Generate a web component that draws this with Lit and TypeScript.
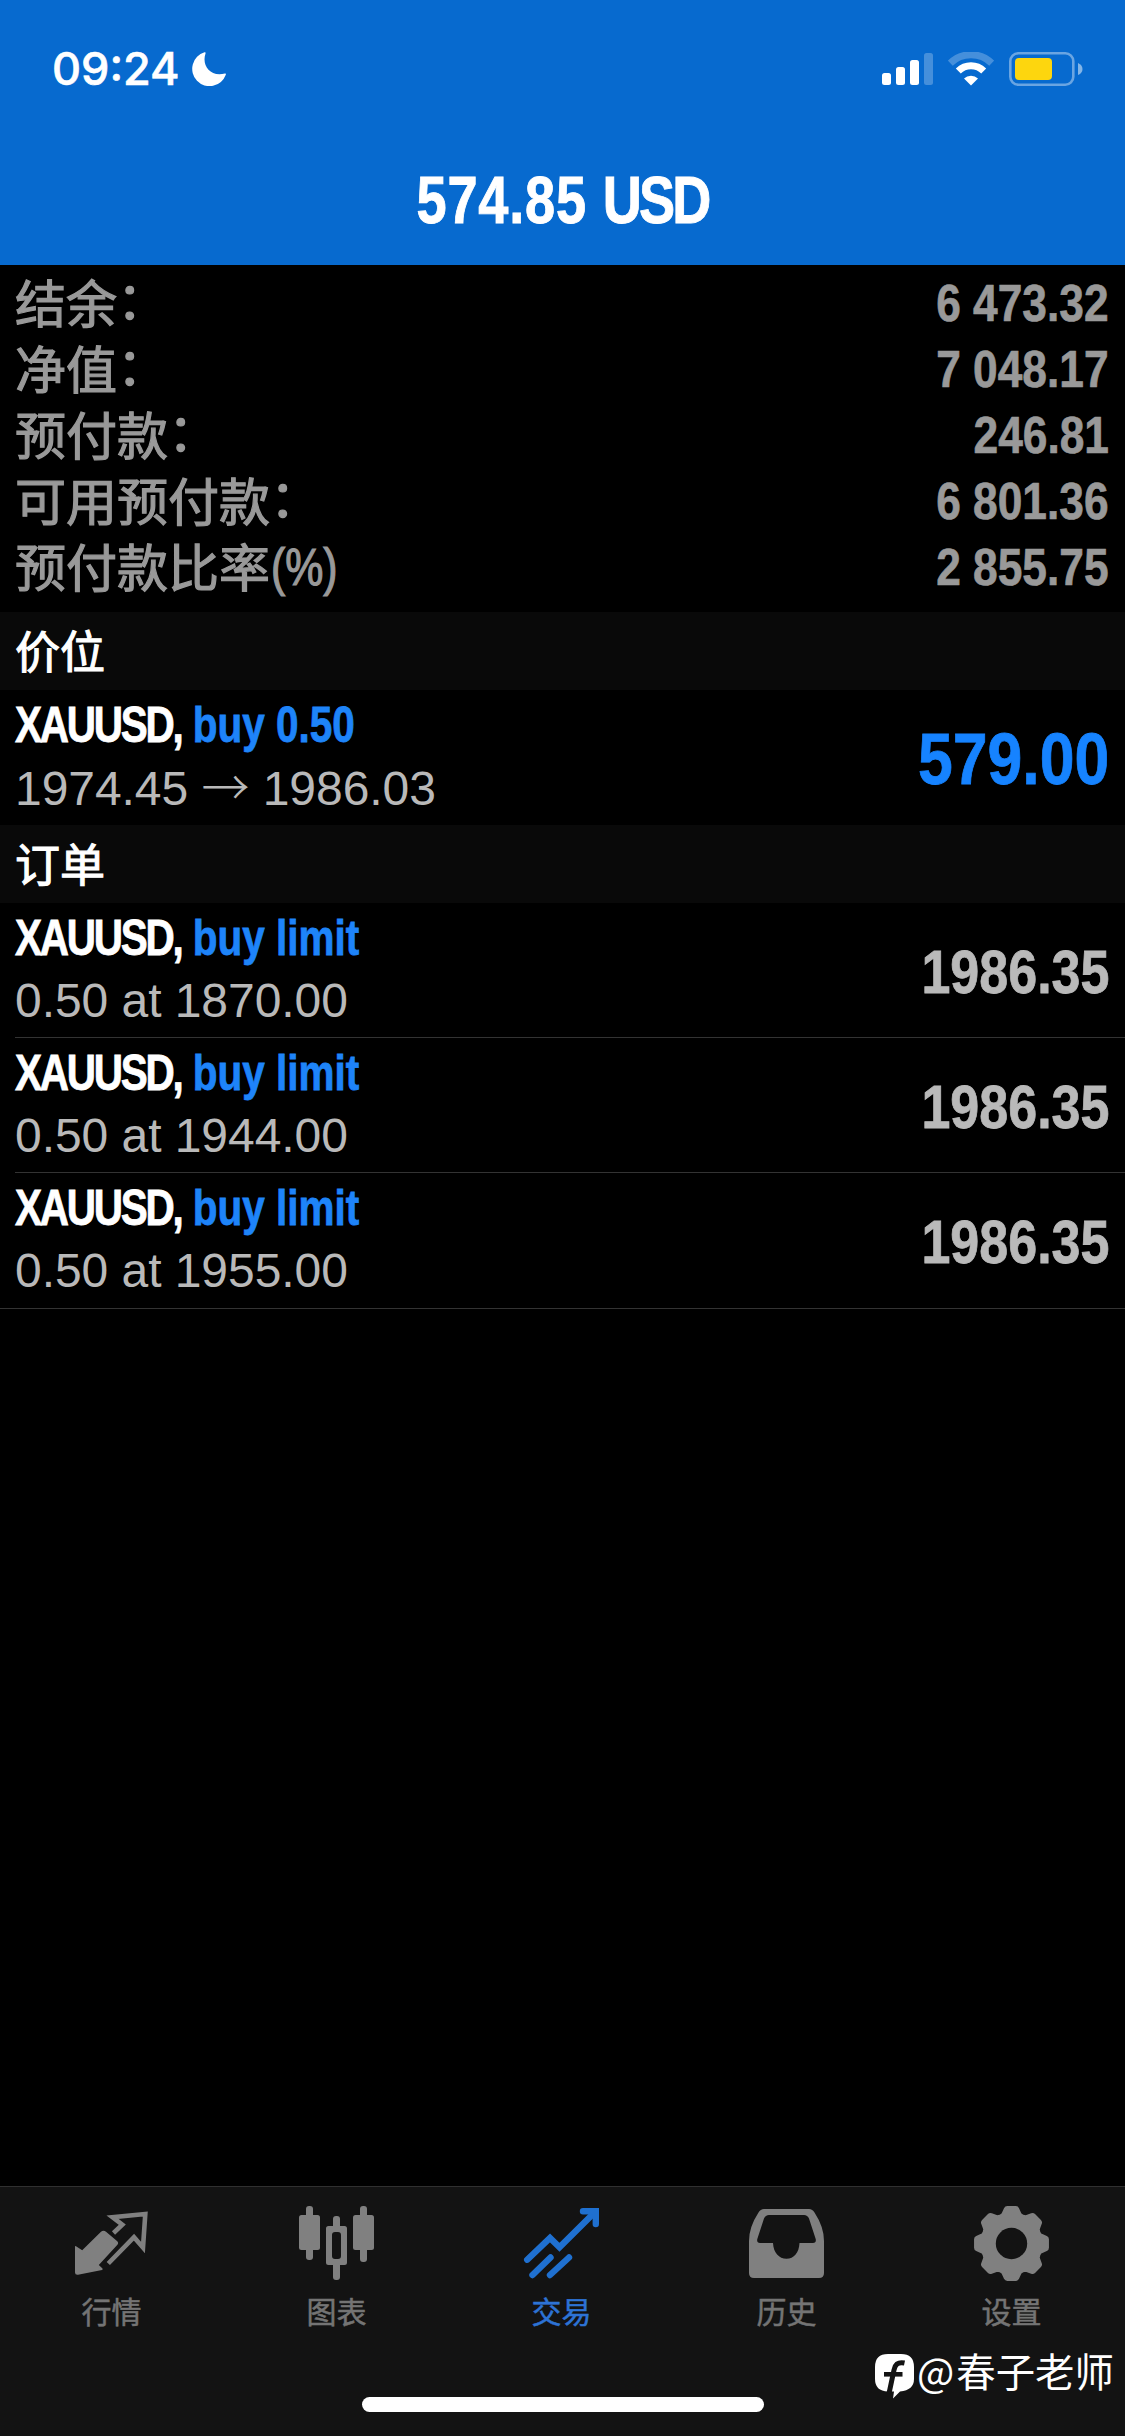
import { LitElement, html, svg, css } from "lit";
import { customElement, property } from "lit/decorators.js";

interface Order { symbol: string; side: string; detail: string; value: string; }

const account = [
  { label: "结余", colon: "：", value: "6 473.32" },
  { label: "净值", colon: "：", value: "7 048.17" },
  { label: "预付款", colon: "：", value: "246.81" },
  { label: "可用预付款", colon: "：", value: "6 801.36" },
  { label: "预付款比率", suffix: "(%)", value: "2 855.75" },
];

const orders: Order[] = [
  { symbol: "XAUUSD,", side: "buy limit", detail: "0.50 at 1870.00", value: "1986.35" },
  { symbol: "XAUUSD,", side: "buy limit", detail: "0.50 at 1944.00", value: "1986.35" },
  { symbol: "XAUUSD,", side: "buy limit", detail: "0.50 at 1955.00", value: "1986.35" },
];

/** Outline of a cog with eight teeth, centred in a 75-unit box. */
function gearPath(): string {
  const pts: string[] = [];
  const at = (r: number, deg: number) => {
    const a = (deg * Math.PI) / 180;
    return `${(37.5 + r * Math.sin(a)).toFixed(2)} ${(37.5 - r * Math.cos(a)).toFixed(2)}`;
  };
  for (let k = 0; k < 8; k++) {
    const c = k * 45;
    pts.push(`${k ? "L" : "M"}${at(34, c - 7)}L${at(34, c + 7)}L${at(28.6, c + 14)}Q${at(26.4, c + 22.5)} ${at(28.6, c + 31)}`);
  }
  return pts.join("") + "Z";
}

const icons: Record<string, unknown> = {
  quotes: svg`
    <path d="M1 40.500Q1 39.600 2 40.200L8.200 44.300 27 25.800Q29.500 23.500 32 25.800L43 35Q45.200 37 43.200 39L24.800 59 28.500 62.500Q29 63.700 28 64L4 68.700Q1 69 1 66.500Z" fill="currentColor"/>
    <path d="M39.500 27 48.300 18.700 38.500 11.200 71.300 8 69 41.500 60 31.200 34.300 57.500" fill="none" stroke="currentColor" stroke-width="4.600"/>`,
  chart: svg`
    <g fill="currentColor">
      <rect x="7" y="0" width="7" height="54" rx="3"/><rect x="0" y="9" width="21" height="35" rx="2.500"/>
      <rect x="61" y="0" width="7" height="56" rx="3"/><rect x="54" y="9" width="21" height="35" rx="2.500"/>
      <rect x="34" y="10" width="7" height="14" rx="3"/><rect x="34" y="55" width="7" height="19" rx="3"/>
      <path fill-rule="evenodd" d="M29.500 20h16a2.500 2.500 0 0 1 2.500 2.500v34a2.500 2.500 0 0 1-2.500 2.500h-16a2.500 2.500 0 0 1-2.500-2.500v-34a2.500 2.500 0 0 1 2.500-2.500ZM36 26a3 3 0 0 0-3 3v21a3 3 0 0 0 3 3h3a3 3 0 0 0 3-3V29a3 3 0 0 0-3-3Z"/>
    </g>`,
  trade: svg`
    <g fill="none" stroke="currentColor" stroke-width="6.400" stroke-linecap="round">
      <path d="M3.200 53.700 26 32 35.500 41.300 70 7"/>
      <path d="M59 5.200H71.800V18"/>
      <path d="M8.500 69 26.500 51.500M26 69 45 51.500"/>
    </g>`,
  history: svg`
    <path fill="currentColor" fill-rule="evenodd" d="M15 3H60Q63.500 3 65.500 6.500 75 21 75 35V67Q75 72 70 72H5Q0 72 0 67V35Q0 21 9.500 6.500 11.500 3 15 3ZM20 9Q16.500 9 15 12.500L8.300 33Q7.500 37 11 37H24C24.500 47 30 52.700 37.500 52.700S50 47 50.500 37H64Q67.500 37 66.700 33L60 12.500Q58.500 9 55 9Z"/>`,
  settings: svg`
    <path d=${gearPath()} fill="currentColor" stroke="currentColor" stroke-width="7.400" stroke-linejoin="round"/>
    <circle cx="37.500" cy="37.500" r="15.700" fill="#131313"/>`,
};

@customElement("status-bar")
class StatusBar extends LitElement {
  static styles = css`
    :host { display: flex; justify-content: space-between; align-items: center; height: 138px; padding: 0 42px 0 52px; box-sizing: border-box; }
    .left, .right { display: flex; align-items: center; }
    .left { gap: 12px; }
    .time { font: 500 45px/54px Inter, "Liberation Sans", sans-serif; width: 128px; white-space: nowrap; -webkit-text-stroke: 0.6px #fff; }
    svg { display: block; }
    .right { gap: 15px; }
  `;
  render() {
    return html`
      <div class="left">
        <span class="time">09:24</span>
        <svg width="34" height="34" viewBox="0 0 34 34"><path fill="#fff" d="M12.500 .3Q14 0 13.500 1.500C9.500 13 18 25.500 33 21.500Q34.300 21.200 33.800 22.700A17.300 17.300 0 1 1 12.500 .3Z"/></svg>
      </div>
      <div class="right">
        <svg width="51" height="34" viewBox="0 0 51 34" fill="#fff">
          <rect x="0" y="21" width="9" height="12" rx="2.500"/><rect x="14" y="15" width="9" height="18" rx="2.500"/>
          <rect x="28" y="8" width="9" height="25" rx="2.500"/><rect x="42" y="1" width="9" height="32" rx="2.500" opacity=".25"/>
        </svg>
        <svg width="46" height="34" viewBox="0 0 46 34" fill="none" stroke="#fff">
          <path d="M2.300 11.200A29.500 29.500 0 0 1 43.700 11.200" stroke-width="7" opacity=".25"/>
          <path d="M10.300 19A18 18 0 0 1 35.700 19" stroke-width="7"/>
          <path d="M16 26.500A10 10 0 0 1 30 26.500L23 33.500Z" fill="#fff" stroke="none"/>
        </svg>
        <svg width="74" height="34" viewBox="0 0 74 34">
          <rect x="1.300" y="1.300" width="63" height="31.400" rx="8" fill="none" stroke="#fff" stroke-opacity=".4" stroke-width="2.600"/>
          <rect x="6" y="6" width="37" height="22" rx="4" fill="#fdd60e"/>
          <path d="M69 11Q73.500 13 73.500 17T69 23Z" fill="#fff" opacity=".5"/>
        </svg>
      </div>`;
  }
}

@customElement("order-row")
class OrderRow extends LitElement {
  @property({ attribute: false }) order!: Order;
  @property({ type: Boolean }) profit = false;
  static styles = css`
    :host { display: flex; justify-content: space-between; height: 135px; box-sizing: border-box; padding: 0 16px 0 15px; white-space: nowrap; }
    .title { height: 70px; font: 700 50px/70px "Liberation Sans", sans-serif; transform: scaleX(.81); transform-origin: 0 0; color: #1e84f9; -webkit-text-stroke: 0.8px currentColor; }
    .symbol { color: #fff; letter-spacing: -2.800px; }
    .detail { font: 400 48px/56px "Liberation Sans", "Noto Sans CJK SC", sans-serif; letter-spacing: -0.050px; color: #b9b9b9; }
    .arrow { font-family: "Noto Sans CJK SC", sans-serif; font-weight: 300; line-height: 1; }
    .value { align-self: center; padding-top: 2px; font: 700 61px/70px "Liberation Sans", sans-serif; color: #b9b9b9; transform: scaleX(.853); transform-origin: 100% 0; -webkit-text-stroke: 0.8px currentColor; }
    .value.profit { font-size: 72px; color: #1683ff; transform: scaleX(.868); }
  `;
  render() {
    const o = this.order;
    return html`
      <div class="info">
        <div class="title"><span class="symbol">${o.symbol}</span> ${o.side}</div>
        <div class="detail">${o.detail.split("→").map((part, i) => (i ? html`<span class="arrow">→</span>${part}` : part))}</div>
      </div>
      <div class="value ${this.profit ? "profit" : ""}">${o.value}</div>`;
  }
}

@customElement("tab-bar")
class TabBar extends LitElement {
  static styles = css`
    :host { display: flex; flex-direction: column; align-items: center; height: 250px; box-sizing: border-box; border-top: 1px solid #303030; background: #131313; }
    .tabs { display: flex; align-self: stretch; height: 210px; padding-top: 19px; margin: 0 1px 0 -1px; box-sizing: border-box; }
    .tab { flex: 1; display: flex; flex-direction: column; align-items: center; color: #808080; }
    .tab.active { color: #1f70d0; }
    .label { margin-top: 7px; font: 400 30px/44px "Noto Sans CJK SC", sans-serif; color: #747474; -webkit-text-stroke: 0.5px currentColor; }
    .active .label { color: #2d73d5; }
    svg { display: block; overflow: visible; }
    .home { width: 402px; height: 15px; border-radius: 8px; background: #fff; }
  `;
  render() {
    const tabs = [["quotes", "行情"], ["chart", "图表"], ["trade", "交易"], ["history", "历史"], ["settings", "设置"]];
    return html`
      <div class="tabs">
        ${tabs.map(([id, label]) => html`
          <div class="tab ${id === "trade" ? "active" : ""}">
            <svg width="75" height="75" viewBox="0 0 75 75">${icons[id]}</svg>
            <span class="label">${label}</span>
          </div>`)}
      </div>
      <div class="home"></div>`;
  }
}

@customElement("app-root")
class AppRoot extends LitElement {
  static styles = css`
    :host { display: flex; flex-direction: column; position: relative; width: 1125px; height: 2436px; overflow: hidden; background: #000; color: #fff; font-family: "Liberation Sans", "Noto Sans CJK SC", sans-serif; }
    .header { height: 265px; background: #076acf; }
    .balance { text-align: center; font: 700 66px/76px "Liberation Sans", sans-serif; transform: scaleX(.82); padding-top: 24px; -webkit-text-stroke: 0.9px #fff; letter-spacing: 1px; }
    .currency { letter-spacing: -3.500px; }
    .account { height: 347px; padding: 2px 16px 0 15px; box-sizing: border-box; color: #999; }
    .line { display: flex; justify-content: space-between; height: 66px; white-space: nowrap; }
    .label { padding-top: 6px; font: 400 51px/66px "Liberation Sans", "Noto Sans CJK SC", sans-serif; -webkit-text-stroke: 1.200px currentColor; }
    .colon { display: inline-block; transform: translate(0, -4px); line-height: 1; }
    .suffix { display: inline-block; line-height: 1; transform: translate(1px, -2px) scaleX(.84); transform-origin: 0 0; }
    .amount { padding-top: 1px; font: 700 51px/72px "Liberation Sans", sans-serif; transform: scaleX(.868); transform-origin: 100% 0; -webkit-text-stroke: 0.7px currentColor; }
    .section { height: 78px; padding: 0 15px; background: #090909; font: 400 45px/76px "Noto Sans CJK SC", sans-serif; -webkit-text-stroke: 1.100px #fff; }
    .divider { height: 1px; margin: -1px 0 0 15px; background: #333; }
    .divider.last { margin: 0; }
    .space { flex: 1; }
    .watermark { position: absolute; left: 875px; top: 2344px; display: flex; align-items: flex-start; gap: 3px; font: 400 39.400px/52px "Noto Sans CJK SC", sans-serif; white-space: nowrap; }
    .watermark svg { display: block; margin-top: 10px; }
    .at { letter-spacing: 2px; }
  `;
  render() {
    return html`
      <div class="header">
        <status-bar></status-bar>
        <div class="balance">574.85 <span class="currency">USD</span></div>
      </div>
      <div class="account">
        ${account.map((a) => html`<div class="line"><span class="label">${a.label}${a.colon ? html`<span class="colon">${a.colon}</span>` : ""}${a.suffix ? html`<span class="suffix">${a.suffix}</span>` : ""}</span><span class="amount">${a.value}</span></div>`)}
      </div>
      <div class="section">价位</div>
      <order-row profit .order=${{ symbol: "XAUUSD,", side: "buy 0.50", detail: "1974.45 → 1986.03", value: "579.00" }}></order-row>
      <div class="section">订单</div>
      ${orders.map((o, i) => html`<order-row .order=${o}></order-row><div class="divider ${i === orders.length - 1 ? "last" : ""}"></div>`)}
      <div class="space"></div>
      <tab-bar></tab-bar>
      <div class="watermark">
        <svg width="39" height="45" viewBox="0 0 39 45">
          <path d="M13 0H26Q39 0 39 13V25Q39 36 25 37.500L18 44.500 19 37.500H13Q0 37 0 25V13Q0 0 13 0Z" fill="#fff"/>
          <path d="M29.500 9C22.500 7.500 20 11 19 16L14 39.500" fill="none" stroke="#131313" stroke-width="5"/>
          <path d="M9 20.300H27.500" stroke="#131313" stroke-width="4.600"/>
        </svg>
        <span><span class="at">@</span>春子老师</span>
      </div>`;
  }
}
